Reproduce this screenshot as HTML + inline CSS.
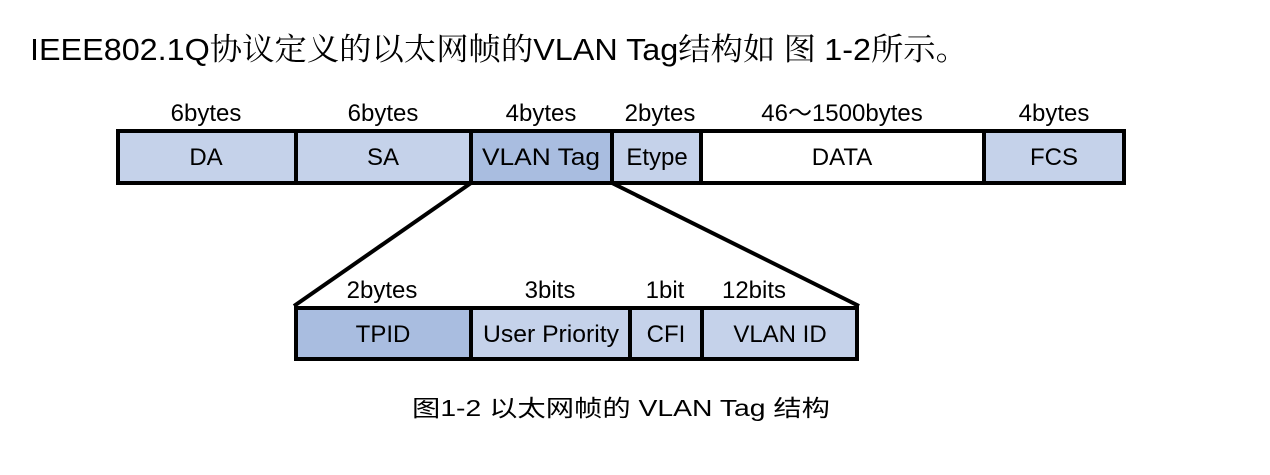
<!DOCTYPE html>
<html><head><meta charset="utf-8"><style>
html,body{margin:0;padding:0;background:#fff;width:1270px;height:475px;overflow:hidden}
svg{display:block}
.t{font-family:"Liberation Sans","Noto Sans CJK SC",sans-serif;font-size:24px;fill:#000}
</style></head><body>
<svg width="1270" height="475" xmlns="http://www.w3.org/2000/svg">
<text x="30" y="60" style="font-family:'Liberation Sans','Noto Sans CJK SC',sans-serif;font-size:31px" textLength="938" lengthAdjust="spacingAndGlyphs">IEEE802.1Q<tspan style="font-family:'Noto Serif CJK SC',serif">协议定义的以太网帧的</tspan>VLAN Tag<tspan style="font-family:'Noto Serif CJK SC',serif">结构如 图 </tspan>1-2<tspan style="font-family:'Noto Serif CJK SC',serif">所示。</tspan></text>

<g class="t" text-anchor="middle">
<text x="206" y="121">6bytes</text>
<text x="383" y="121">6bytes</text>
<text x="541" y="121">4bytes</text>
<text x="660" y="121">2bytes</text>
<text x="842" y="121">46～1500bytes</text>
<text x="1054" y="121">4bytes</text>
</g>
<rect x="118" y="131" width="1006" height="52" fill="#c5d2ea"/>
<rect x="471" y="131" width="141" height="52" fill="#a9bde0"/>
<rect x="701" y="131" width="283" height="52" fill="#fff"/>
<rect x="118" y="131" width="1006" height="52" fill="none" stroke="#000" stroke-width="4"/>
<g stroke="#000" stroke-width="4">
<line x1="296" y1="131" x2="296" y2="183"/>
<line x1="471" y1="131" x2="471" y2="183"/>
<line x1="612" y1="131" x2="612" y2="183"/>
<line x1="701" y1="131" x2="701" y2="183"/>
<line x1="984" y1="131" x2="984" y2="183"/>
<line x1="471" y1="183" x2="294" y2="306"/>
<line x1="612" y1="183" x2="859" y2="306"/>
</g>
<g class="t" text-anchor="middle">
<text x="206" y="165">DA</text>
<text x="383" y="165">SA</text>
<text x="541" y="165" textLength="118" lengthAdjust="spacingAndGlyphs">VLAN Tag</text>
<text x="657" y="165">Etype</text>
<text x="842" y="165">DATA</text>
<text x="1054" y="165">FCS</text>
<text x="382" y="298">2bytes</text>
<text x="550" y="298">3bits</text>
<text x="665" y="298">1bit</text>
<text x="754" y="298">12bits</text>
</g>
<rect x="296" y="308" width="561" height="51" fill="#c5d2ea"/>
<rect x="296" y="308" width="175" height="51" fill="#a9bde0"/>
<rect x="296" y="308" width="561" height="51" fill="none" stroke="#000" stroke-width="4"/>
<g stroke="#000" stroke-width="4">
<line x1="471" y1="308" x2="471" y2="359"/>
<line x1="630" y1="308" x2="630" y2="359"/>
<line x1="702" y1="308" x2="702" y2="359"/>
</g>
<g class="t" text-anchor="middle">
<text x="383" y="342">TPID</text>
<text x="551" y="342" textLength="136" lengthAdjust="spacingAndGlyphs">User Priority</text>
<text x="666" y="342">CFI</text>
<text x="780" y="342">VLAN ID</text>
</g>
<text x="412" y="416" class="t" style="font-size:23px" textLength="418" lengthAdjust="spacingAndGlyphs">图1-2  以太网帧的 VLAN Tag 结构</text>
</svg>
</body></html>
